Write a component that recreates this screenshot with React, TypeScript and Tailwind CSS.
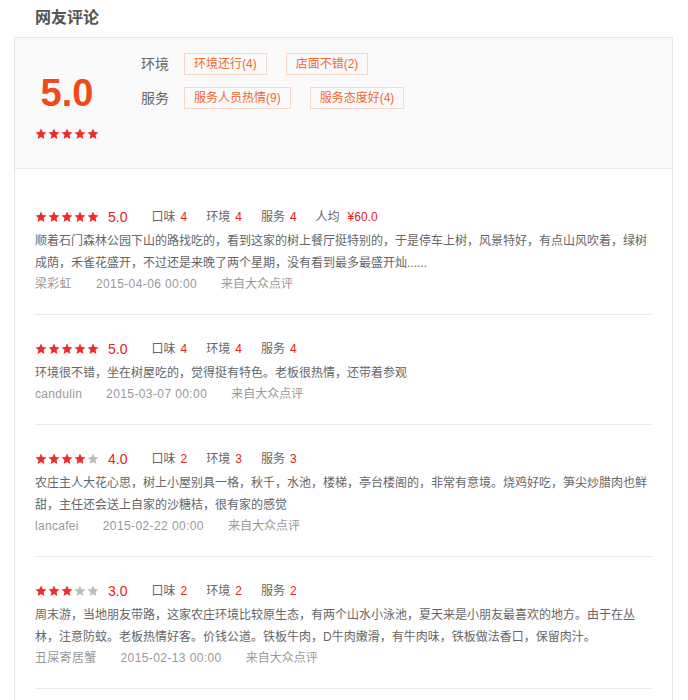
import React from "react";

const font = { fontFamily: '"Liberation Sans", "Noto Sans CJK SC", sans-serif' };

type Review = {
  score: number;
  taste: number;
  env: number;
  service: number;
  price?: string;
  text: string;
  user: string;
  date: string;
};

const reviews: Review[] = [
  {
    score: 5,
    taste: 4,
    env: 4,
    service: 4,
    price: "¥60.0",
    text: "顺着石门森林公园下山的路找吃的，看到这家的树上餐厅挺特别的，于是停车上树，风景特好，有点山风吹着，绿树成荫，禾雀花盛开，不过还是来晚了两个星期，没有看到最多最盛开灿......",
    user: "梁彩虹",
    date: "2015-04-06 00:00",
  },
  {
    score: 5,
    taste: 4,
    env: 4,
    service: 4,
    text: "环境很不错，坐在树屋吃的，觉得挺有特色。老板很热情，还带着参观",
    user: "candulin",
    date: "2015-03-07 00:00",
  },
  {
    score: 4,
    taste: 2,
    env: 3,
    service: 3,
    text: "农庄主人大花心思，树上小屋别具一格，秋千，水池，楼梯，亭台楼阁的，非常有意境。烧鸡好吃，笋尖炒腊肉也鲜甜，主任还会送上自家的沙糖桔，很有家的感觉",
    user: "lancafei",
    date: "2015-02-22 00:00",
  },
  {
    score: 3,
    taste: 2,
    env: 2,
    service: 2,
    text: "周末游，当地朋友带路，这家农庄环境比较原生态，有两个山水小泳池，夏天来是小朋友最喜欢的地方。由于在丛林，注意防蚊。老板热情好客。价钱公道。铁板牛肉，D牛肉嫩滑，有牛肉味，铁板做法香口，保留肉汁。",
    user: "丑屎寄居蟹",
    date: "2015-02-13 00:00",
  },
];

function Stars({ count }: { count: number }) {
  return (
    <div className="flex gap-px">
      {[0, 1, 2, 3, 4].map((i) => (
        <svg key={i} width="12" height="12" viewBox="0 0 24 24">
          <polygon
            points="12,1 15.2,8.1 23,8.9 17.1,14.1 18.8,22 12,18 5.2,22 6.9,14.1 1,8.9 8.8,8.1"
            fill={i < count ? "#f02b2b" : "#bdbdbd"}
          />
        </svg>
      ))}
    </div>
  );
}

function Tag({ label }: { label: string }) {
  return (
    <span className="inline-flex h-[22px] items-center border border-[#f7d9c9] px-[9px] text-[12px] text-[#f0692e]">
      {label}
    </span>
  );
}

function Item({ label, value }: { label: string; value: string | number }) {
  return (
    <span className="flex items-center">
      <span className="text-[#666]">{label}</span>
      <span className="ml-[5px] text-[#e82020]">{value}</span>
    </span>
  );
}

export default function App() {
  return (
    <div className="min-h-screen bg-white pl-[14px] pr-[15px]" style={font}>
      <h2 className="h-[30px] pl-[21px] pt-[6px] text-[16px] font-bold leading-[24px] text-[#555]">
        网友评论
      </h2>
      <div className="mt-[7px] border border-[#e6e6e6]">
        <section className="flex h-[131px] border-b border-[#e8e8e8] bg-[#fafafa]">
          <div className="flex w-[104px] flex-col items-center pt-[35px]">
            <span className="text-[38px] font-bold leading-[40px] text-[#f04a1c]">5.0</span>
            <div className="mt-[15px]">
              <Stars count={5} />
            </div>
          </div>
          <div className="ml-[22px] flex flex-col gap-[12px] pt-[15px]">
            <div className="flex items-center">
              <span className="w-[28px] text-[14px] text-[#666]">环境</span>
              <div className="ml-[15px] flex gap-[19px]">
                <Tag label="环境还行(4)" />
                <Tag label="店面不错(2)" />
              </div>
            </div>
            <div className="flex items-center">
              <span className="w-[28px] text-[14px] text-[#666]">服务</span>
              <div className="ml-[15px] flex gap-[19px]">
                <Tag label="服务人员热情(9)" />
                <Tag label="服务态度好(4)" />
              </div>
            </div>
          </div>
        </section>
        <section className="px-[20px] pb-[30px] pt-[14px]">
          {reviews.map((r, index) => (
            <div key={index} className="border-b border-[#e8e8e8] pb-[20px] pt-[24px] text-[12px]">
              <div className="flex h-[20px] items-center">
                <Stars count={r.score} />
                <span className="ml-[9px] text-[14px] text-[#e82020]">{r.score.toFixed(1)}</span>
                <div className="ml-[24px] flex gap-[19px]">
                  <Item label="口味" value={r.taste} />
                  <Item label="环境" value={r.env} />
                  <Item label="服务" value={r.service} />
                  {r.price && (
                    <span className="flex items-center">
                      <span className="text-[#666]">人均</span>
                      <span className="ml-[8px] text-[#e82020]">{r.price}</span>
                    </span>
                  )}
                </div>
              </div>
              <p className="mt-[3px] leading-[22px] text-[#666]">{r.text}</p>
              <div className="flex h-[20px] items-center gap-[24px] text-[#999]">
                <span className="tracking-[0.3px]">{r.user}</span>
                <span className="tracking-[0.4px]">{r.date}</span>
                <span>来自大众点评</span>
              </div>
            </div>
          ))}
        </section>
      </div>
    </div>
  );
}
